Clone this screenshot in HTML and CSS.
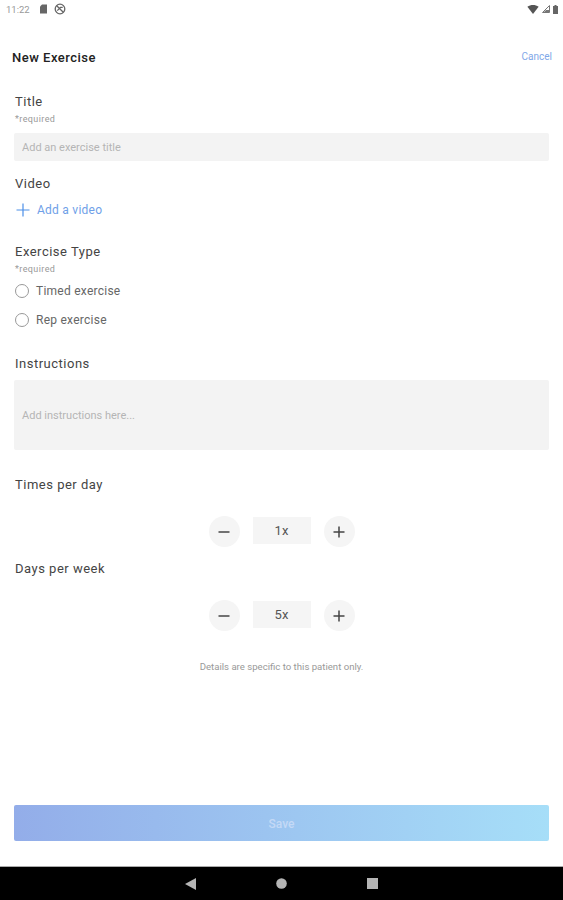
FILE: index.html
```html
<!DOCTYPE html>
<html lang="en">
<head>
  <meta charset="UTF-8">
  <title>New Exercise</title>
  <link rel="stylesheet" href="styles.css">
</head>
<body>
  <div class="status-bar">
    <span class="clock">11:22</span>
    <svg class="status-icon" width="9" height="10" viewBox="0 0 9 10"><path d="M1 2.5 3 .5h5v9H1z" fill="#666"/></svg>
    <svg class="status-icon" width="12" height="12" viewBox="0 0 11 11" fill="none" stroke="#666" stroke-width="1.2"><circle cx="5.5" cy="5.5" r="4.4"/><path d="M2.5 2.5l6 6M3 7l3-3 2 0"/></svg>
    <span class="status-right">
      <svg width="12" height="9" viewBox="0 0 10 8"><path d="M0 1.5C3 -.5 7 -.5 10 1.5L5 8z" fill="#555"/></svg>
      <svg width="8" height="8" viewBox="0 0 8 8"><path d="M7.5 .5v7H.5z" fill="none" stroke="#777"/><path d="M4 5h3v2.500H1.500z" fill="#777"/></svg>
      <svg width="5" height="9" viewBox="0 0 5 9"><path d="M1.500 0h2v1H5v8H0V1h1.500z" fill="#666"/></svg>
    </span>
  </div>

  <header class="top-bar">
    <h1>New Exercise</h1>
    <a class="cancel" href="#">Cancel</a>
  </header>

  <form class="form">
    <div class="label title-label">Title</div>
    <div class="hint">*required</div>
    <input class="text-input" type="text" placeholder="Add an exercise title">

    <div class="label video-label">Video</div>
    <a class="add-video" href="#">
      <svg width="16" height="16" viewBox="0 0 16 16" fill="none" stroke="#4d8fe8" stroke-width="1.2"><path d="M8 1.500v13M1.500 8h13"/></svg>
      Add a video
    </a>

    <div class="label type-label">Exercise Type</div>
    <div class="hint">*required</div>
    <label class="radio-row first-radio"><span class="radio"></span>Timed exercise</label>
    <label class="radio-row"><span class="radio"></span>Rep exercise</label>

    <div class="label instructions-label">Instructions</div>
    <textarea class="text-area" placeholder="Add instructions here..."></textarea>

    <div class="label times-label">Times per day</div>
    <div class="stepper">
      <button class="step-btn" type="button"><svg width="12" height="12" viewBox="0 0 12 12" stroke="#444" stroke-width="1.500"><path d="M.5 6h11"/></svg></button>
      <div class="step-value">1x</div>
      <button class="step-btn" type="button"><svg width="12" height="12" viewBox="0 0 12 12" stroke="#444" stroke-width="1.500"><path d="M.5 6h11M6 .5v11"/></svg></button>
    </div>

    <div class="label days-label">Days per week</div>
    <div class="stepper">
      <button class="step-btn" type="button"><svg width="12" height="12" viewBox="0 0 12 12" stroke="#444" stroke-width="1.500"><path d="M.5 6h11"/></svg></button>
      <div class="step-value">5x</div>
      <button class="step-btn" type="button"><svg width="12" height="12" viewBox="0 0 12 12" stroke="#444" stroke-width="1.500"><path d="M.5 6h11M6 .5v11"/></svg></button>
    </div>

    <p class="note">Details are specific to this patient only.</p>

    <button class="save" type="button">Save</button>
  </form>

  <nav class="nav-bar">
    <svg width="11" height="12" viewBox="0 0 11 12"><path d="M11 0v12L0 6z" fill="#b5b5b5"/></svg>
    <svg width="11" height="11" viewBox="0 0 11 11"><circle cx="5.500" cy="5.500" r="5.300" fill="#b5b5b5"/></svg>
    <svg width="11" height="11" viewBox="0 0 11 11"><path d="M0 0h11v11H0z" fill="#b5b5b5"/></svg>
  </nav>
</body>
</html>
```

FILE: styles.css
```css
* {
  box-sizing: border-box;
}
body {
  margin: 0;
  height: 900px;
  display: flex;
  flex-direction: column;
  background: white;
  color: #444;
  font-family: Roboto, "Liberation Sans", sans-serif;
  overflow: hidden;
}
.status-bar {
  height: 18px;
  padding: 0 6px;
  display: flex;
  align-items: center;
  gap: 6px;
  color: #999;
  font-size: 9.500px;
}
.clock {
  margin-right: 3px;
}
.status-right {
  margin-left: auto;
  margin-right: -1px;
  display: flex;
  align-items: center;
  gap: 3px;
}
.top-bar {
  height: 26px;
  margin-top: 25px;
  padding: 0 11px 0 12px;
  display: flex;
  justify-content: space-between;
  align-items: center;
}
h1 {
  margin: 2px 0 0;
  color: #222;
  font-size: 13px;
  font-weight: 500;
  letter-spacing: 0.5px;
}
.cancel {
  color: #7fa8e8;
  font-size: 10px;
  text-decoration: none;
}
.form {
  flex: 1;
  padding: 0 14px 25px;
  display: flex;
  flex-direction: column;
}
.label {
  height: 16px;
  line-height: 16px;
  font-size: 13px;
  letter-spacing: 0.5px;
  padding-left: 1px;
}
.title-label {
  margin-top: 25px;
}
.hint {
  height: 10px;
  line-height: 10px;
  margin-top: 4px;
  padding-left: 1px;
  color: #999;
  font-size: 9px;
  letter-spacing: 0.4px;
}
.text-input, .text-area {
  display: block;
  width: 100%;
  border: 0;
  border-radius: 2px;
  background: #f3f3f3;
  padding: 0 8px;
  font-family: inherit;
  font-size: 11px;
  outline: none;
}
input::placeholder, textarea::placeholder {
  color: #b5b5b5;
  opacity: 1;
}
.text-input {
  height: 28px;
  margin-top: 9px;
}
.video-label {
  margin-top: 15px;
}
.add-video {
  height: 16px;
  margin-top: 10px;
  padding-left: 1px;
  display: flex;
  align-items: center;
  gap: 6px;
  color: #6f9fe8;
  font-size: 12px;
  letter-spacing: 0.25px;
  text-decoration: none;
}
.type-label {
  margin-top: 26px;
}
.radio-row {
  height: 16px;
  padding-left: 1px;
  display: flex;
  align-items: center;
  gap: 7px;
  color: #666;
  font-size: 12px;
  letter-spacing: 0.25px;
  margin-top: 13px;
}
.first-radio {
  margin-top: 9px;
}
.radio {
  width: 14px;
  height: 14px;
  border: 1px solid #999;
  border-radius: 50%;
}
.instructions-label {
  margin-top: 28px;
}
.text-area {
  height: 70px;
  margin-top: 8px;
  padding-top: 29px;
  resize: none;
}
.times-label {
  margin-top: 27px;
}
.stepper {
  margin-top: 23px;
  display: flex;
  justify-content: center;
  align-items: center;
  gap: 13px;
}
.step-btn {
  width: 31px;
  height: 31px;
  padding: 0;
  border: 0;
  border-radius: 50%;
  background: #f5f5f5;
  display: flex;
  justify-content: center;
  align-items: center;
}
.step-value {
  width: 58px;
  height: 27px;
  margin-bottom: 2px;
  line-height: 27px;
  background: #f5f5f5;
  text-align: center;
  font-size: 13px;
  color: #555;
}
.days-label {
  margin-top: 14px;
}
.note {
  margin: 30px 0 0;
  color: #999;
  font-size: 9.600px;
  line-height: 12px;
  text-align: center;
}
.save {
  margin-top: auto;
  height: 36px;
  padding-top: 2px;
  border: 0;
  border-radius: 2px;
  background: linear-gradient(90deg, #93ade9, #a6def8);
  color: #c4d9f6;
  font-family: inherit;
  font-size: 12px;
  font-weight: 500;
}
.nav-bar {
  height: 34px;
  background: black;
  border-top: 1px solid #aaa;
  display: flex;
  justify-content: center;
  align-items: center;
  gap: 80px;
}
```
